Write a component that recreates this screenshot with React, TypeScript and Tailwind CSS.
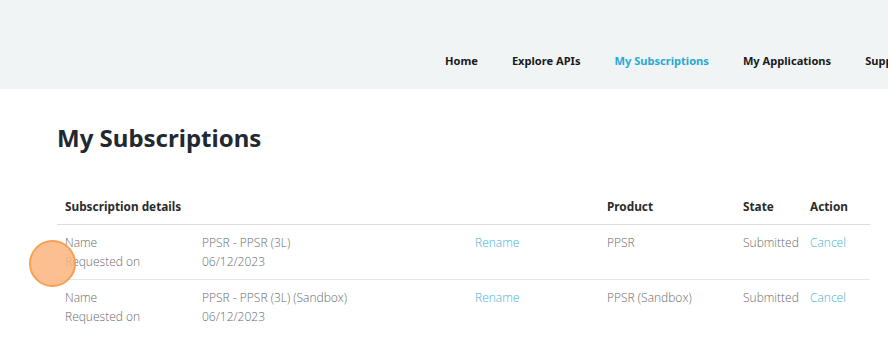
import React from "react";

const navItems = ["Home", "Explore APIs", "My Subscriptions", "My Applications", "Support"];

const rows = [
  { name: "PPSR - PPSR (3L)", date: "06/12/2023", product: "PPSR", state: "Submitted" },
  { name: "PPSR - PPSR (3L) (Sandbox)", date: "06/12/2023", product: "PPSR (Sandbox)", state: "Submitted" },
];

export default function App() {
  return (
    <div className="relative w-[888px] h-[343px] overflow-hidden bg-white font-['Open_Sans',sans-serif]">
      {/* top nav */}
      <header className="h-[89px] bg-[#f1f4f5]">
        <nav className="flex gap-[34px] pl-[445px] pt-[53px] leading-[16px] whitespace-nowrap font-['Noto_Sans',sans-serif] text-[11.1px] font-bold text-[#1a1a1a]">
          {navItems.map((item) => (
            <span key={item} className={item === "My Subscriptions" ? "text-[#27a9d3]" : ""}>
              {item}
            </span>
          ))}
        </nav>
      </header>

      <main className="px-[57px]">
        <h1 className="mt-[33px] font-['Noto_Sans',sans-serif] text-[24px] font-bold text-[#222831] leading-[32px]">
          My Subscriptions
        </h1>

        <table className="mt-[43px] w-[813px] text-[12px] leading-[19px] border-collapse">
          <thead>
            <tr className="border-b border-[#dedede] text-left font-['Noto_Sans',sans-serif] text-[11.8px] text-[#2b2b2b]">
              <th className="pl-[8px] pb-[8px] font-bold" colSpan={3}>Subscription details</th>
              <th className="pb-[8px] font-bold">Product</th>
              <th className="pb-[8px] font-bold">State</th>
              <th className="pb-[8px] font-bold">Action</th>
            </tr>
          </thead>
          <tbody className="font-light">
            {rows.map((r, i) => (
              <tr key={i} className={i === 0 ? "border-b border-[#e6e6e6] align-top text-[#6a6a6a]" : "align-top text-[#6a6a6a]"}>
                <td className="pl-[8px] pt-[8px] pb-[8px] w-[145px]">
                  <div>Name</div>
                  <div>Requested on</div>
                </td>
                <td className="pt-[8px] w-[273px]">
                  <div>{r.name}</div>
                  <div>{r.date}</div>
                </td>
                <td className="pt-[8px] w-[132px] text-[#3fb3d4]">Rename</td>
                <td className="pt-[8px] w-[136px]">{r.product}</td>
                <td className="pt-[8px] w-[67px]">{r.state}</td>
                <td className="pt-[8px] text-[#3fb3d4]">Cancel</td>
              </tr>
            ))}
          </tbody>
        </table>
      </main>

      {/* click marker */}
      <div className="absolute left-[29px] top-[240px] w-[47px] h-[47px] rounded-full bg-[#fbb47f]/85 border-2 border-[#f7a050]" />
    </div>
  );
}
